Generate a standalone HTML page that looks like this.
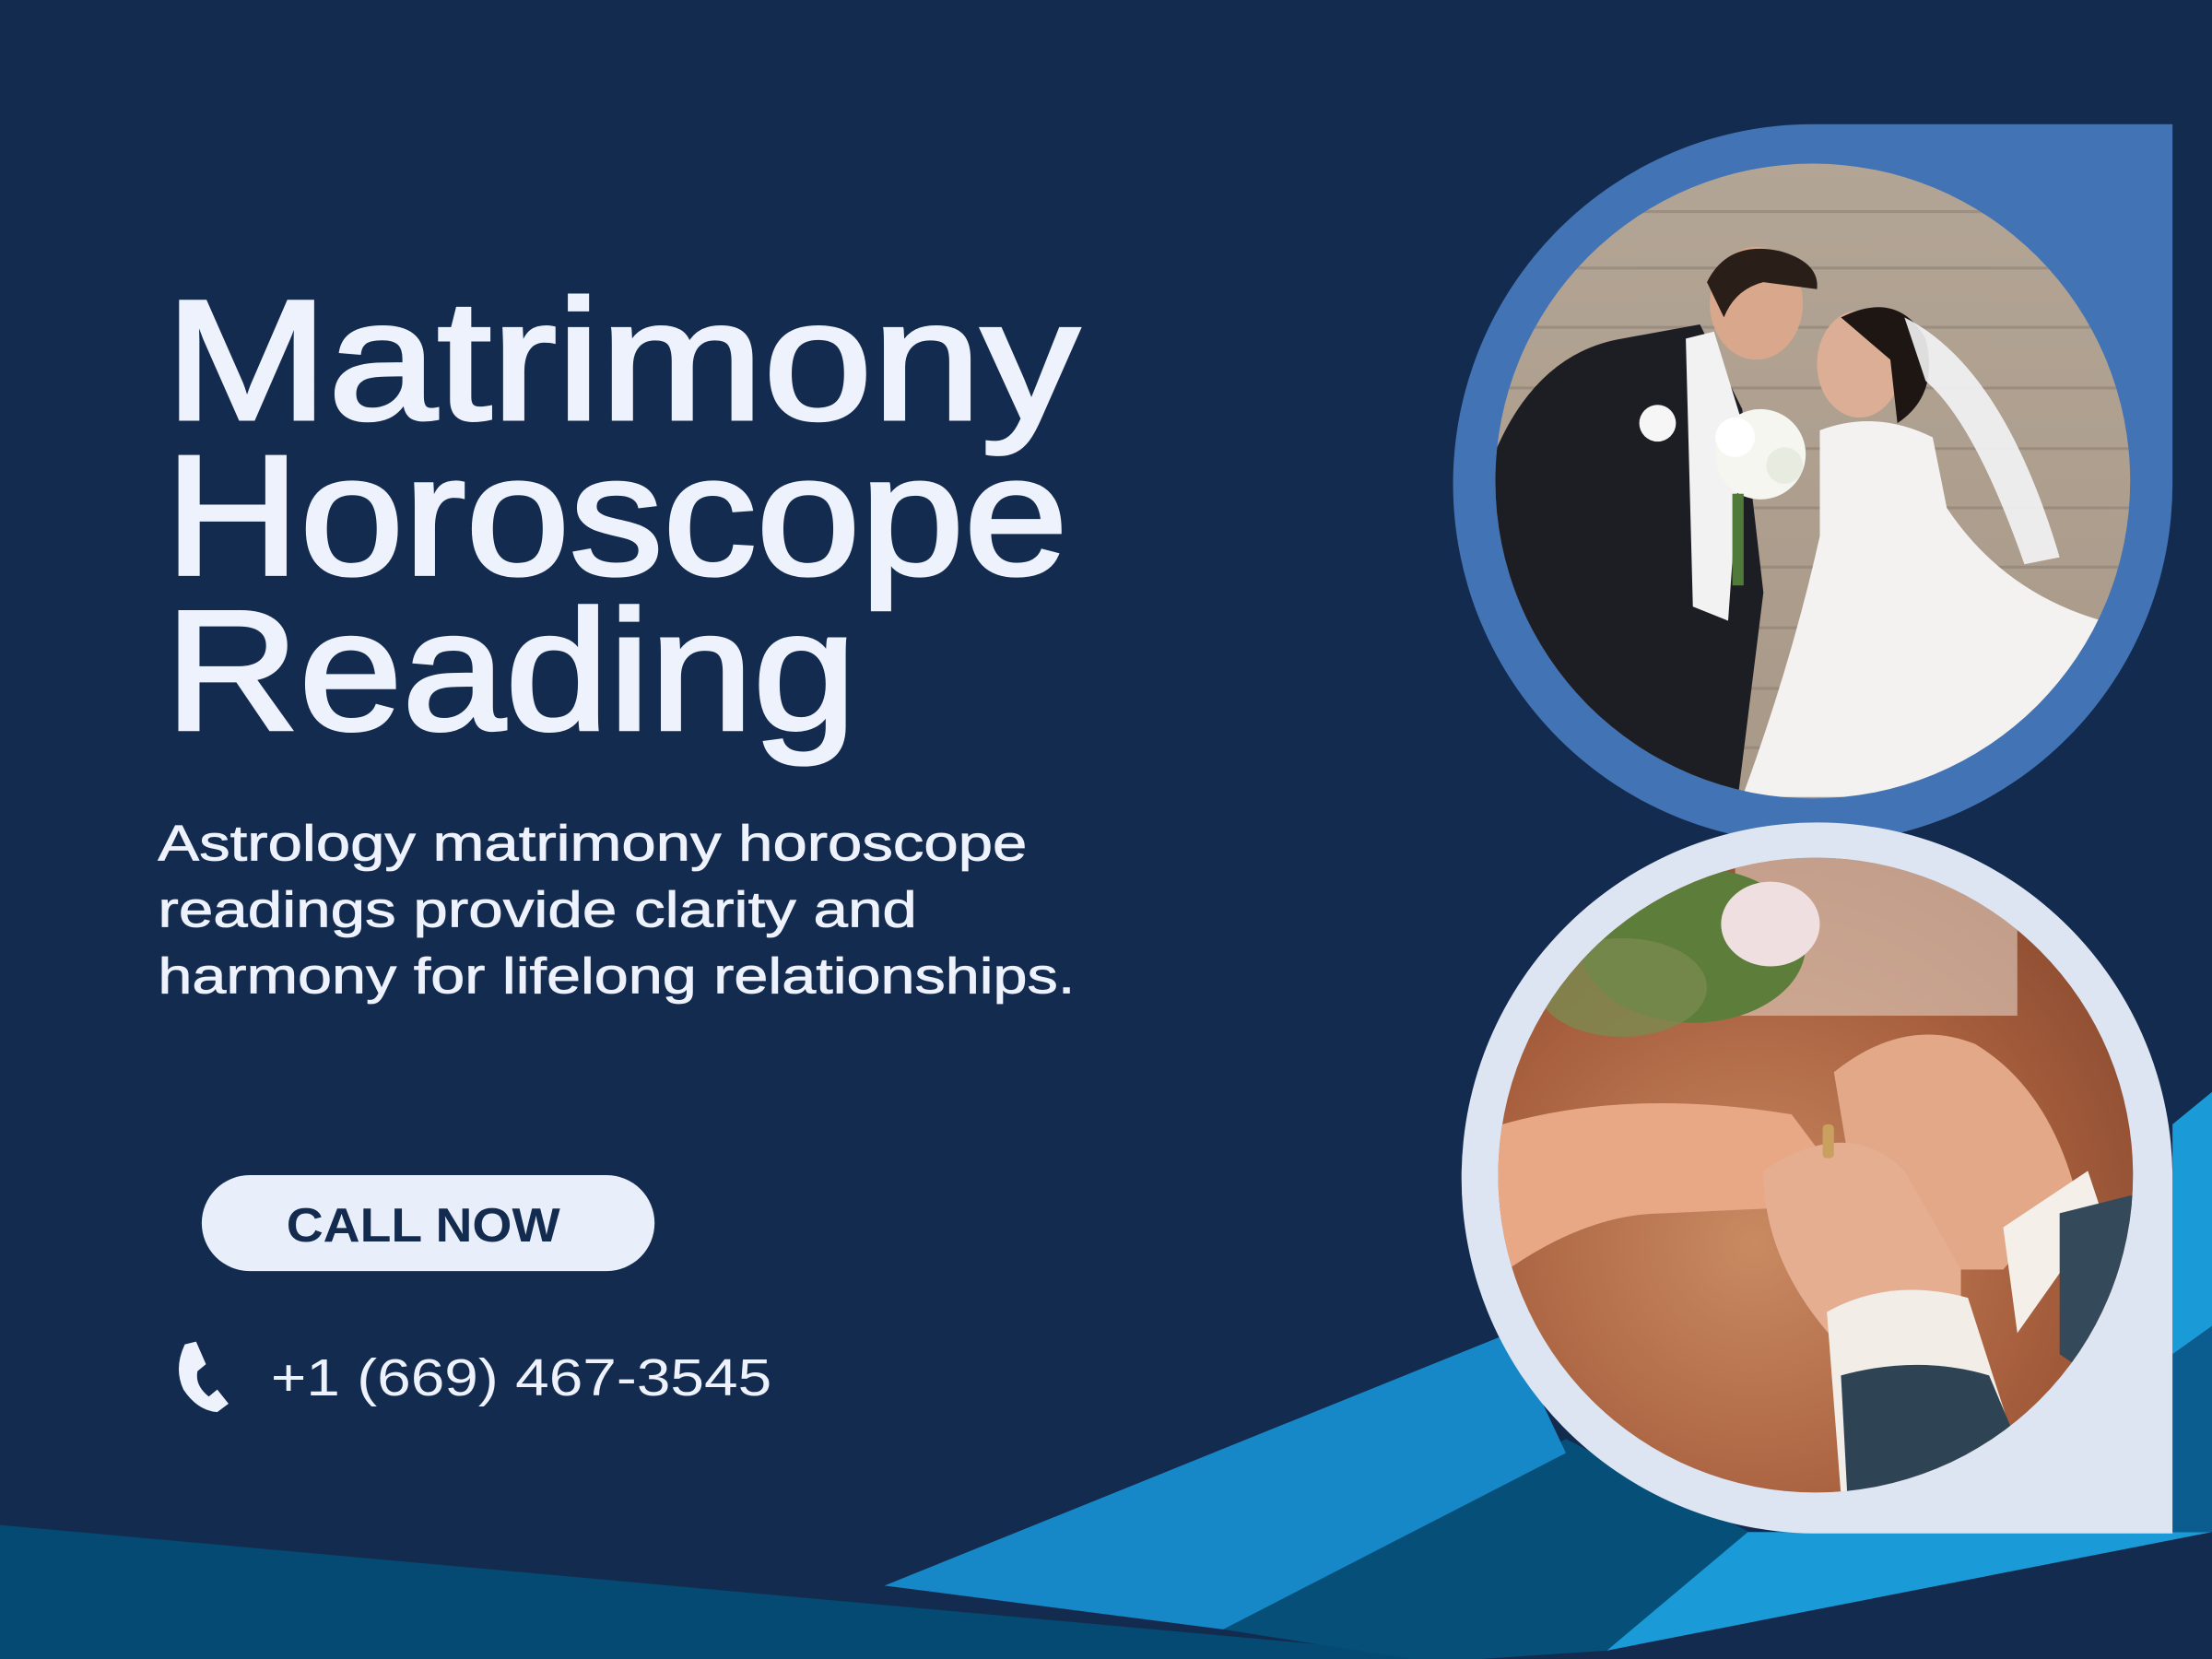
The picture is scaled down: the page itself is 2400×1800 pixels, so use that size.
<!DOCTYPE html>
<html><head><meta charset="utf-8"><style>
html,body{margin:0;padding:0;background:#132b4f;}
svg{display:block}
</style></head><body>
<svg width="2400" height="1800" viewBox="0 0 1568 1176" preserveAspectRatio="none" xmlns="http://www.w3.org/2000/svg">
<defs>
<clipPath id="c1"><circle cx="1285" cy="341" r="225"/></clipPath>
<clipPath id="c2"><circle cx="1287" cy="833" r="225"/></clipPath>
<linearGradient id="wood" x1="0" y1="0" x2="0" y2="1"><stop offset="0" stop-color="#b3a595"/><stop offset="1" stop-color="#a89888"/></linearGradient>
<radialGradient id="warm" cx="0.4" cy="0.6" r="0.7"><stop offset="0" stop-color="#c98a62"/><stop offset="0.6" stop-color="#a8603e"/><stop offset="1" stop-color="#8a4a30"/></radialGradient>
</defs>
<rect width="1568" height="1176" fill="#132b4f"/>
<polygon points="0,1081 1050,1176 0,1176" fill="#054a72"/>
<polygon points="867,1155 1110,1020 1240,1086 1139,1170 1050,1176 1000,1176" fill="#054f79"/>
<polygon points="627,1124 1070,945 1110,1030 867,1155" fill="#1688c8"/>
<polygon points="1139,1170 1239,1086 1568,1086" fill="#1a9ad6"/>
<polygon points="1540,797 1568,774 1568,940 1540,960" fill="#1a9ad6"/>
<polygon points="1540,960 1568,940 1568,1086 1540,1086" fill="#0b5d8f"/>
<path d="M1285,88 L1540,88 L1540,341 A255,255 0 1 1 1285,88 Z" fill="#4273b5"/>
<path d="M1540,835 A252,252 0 1 0 1285,1087 L1540,1087 Z" fill="#dde5f3"/>
<g clip-path="url(#c1)">
<rect x="1050" y="110" width="480" height="470" fill="url(#wood)"/>
<g stroke="#8e8074" stroke-width="2" opacity="0.6">
<line x1="1050" y1="150" x2="1530" y2="150"/><line x1="1050" y1="190" x2="1530" y2="190"/><line x1="1050" y1="232" x2="1530" y2="232"/><line x1="1050" y1="275" x2="1530" y2="275"/><line x1="1050" y1="318" x2="1530" y2="318"/><line x1="1050" y1="360" x2="1530" y2="360"/><line x1="1050" y1="402" x2="1530" y2="402"/><line x1="1050" y1="445" x2="1530" y2="445"/><line x1="1050" y1="488" x2="1530" y2="488"/><line x1="1050" y1="530" x2="1530" y2="530"/>
</g>
<path d="M1060,320 Q1090,250 1150,240 L1205,230 L1235,290 L1250,420 L1232,565 L1060,565 Z" fill="#1d1d24"/>
<path d="M1195,240 L1215,235 L1235,300 L1225,440 L1200,430 Z" fill="#f2f2f2"/>
<ellipse cx="1245" cy="215" rx="33" ry="40" fill="#d9a88c"/>
<path d="M1210,200 Q1225,170 1262,178 Q1290,186 1288,205 L1250,200 Q1230,205 1222,225 Z" fill="#2a1e18"/>
<ellipse cx="1318" cy="258" rx="30" ry="38" fill="#dcae95"/>
<path d="M1305,225 Q1345,205 1365,240 Q1375,280 1345,300 L1340,255 Z" fill="#1e1612"/>
<path d="M1350,225 Q1420,260 1460,395 L1435,400 Q1400,300 1365,270 Z" fill="#f4f4f6" opacity="0.9"/>
<path d="M1290,305 Q1330,290 1370,310 L1380,360 Q1420,420 1490,440 L1490,565 L1235,565 Q1270,470 1290,380 Z" fill="#f3f2f1"/>
<circle cx="1248" cy="322" r="32" fill="#f6f6f0"/>
<circle cx="1230" cy="310" r="14" fill="#ffffff"/><circle cx="1265" cy="330" r="13" fill="#e8ece0"/>
<circle cx="1175" cy="300" r="13" fill="#f6f6f6"/>
<rect x="1228" y="350" width="8" height="65" fill="#4f7a3a"/>
</g>
<g clip-path="url(#c2)">
<rect x="1055" y="600" width="470" height="470" fill="url(#warm)"/>
<rect x="1230" y="600" width="200" height="120" fill="#d7c0b0" opacity="0.7"/>
<ellipse cx="1200" cy="670" rx="80" ry="55" fill="#5d7d3a"/>
<ellipse cx="1255" cy="655" rx="35" ry="30" fill="#f0dfe0"/>
<ellipse cx="1150" cy="700" rx="60" ry="35" fill="#7a8a50" opacity="0.8"/>
<path d="M1055,800 Q1150,770 1270,790 L1300,830 L1290,855 L1180,860 Q1120,860 1055,910 Z" fill="#e8a886"/>
<path d="M1300,760 Q1350,720 1400,740 Q1450,770 1470,840 L1420,900 L1370,900 Q1340,860 1310,820 Z" fill="#e2a888"/>
<path d="M1250,830 Q1310,790 1350,830 L1390,900 L1390,960 L1310,960 Q1250,900 1250,830 Z" fill="#e6ae90"/>
<path d="M1295,930 Q1340,905 1395,920 L1440,1060 L1305,1060 Z" fill="#f2ede6"/>
<path d="M1305,975 Q1360,960 1410,975 L1450,1070 L1310,1070 Z" fill="#2e4354"/>
<path d="M1420,870 L1480,830 L1490,860 L1430,945 Z" fill="#f4efe8"/>
<path d="M1460,860 L1520,845 L1520,1000 L1460,960 Z" fill="#34495a"/>
<rect x="1292" y="797" width="8" height="24" rx="3" fill="#caa060"/>
</g>
<g font-family="'Liberation Sans', sans-serif" fill="#eef2fc">
<g stroke="#eef2fc" stroke-width="2.5">
<text x="117" y="297" font-size="121" textLength="648" lengthAdjust="spacingAndGlyphs">Matrimony</text>
<text x="117" y="407" font-size="121" textLength="640" lengthAdjust="spacingAndGlyphs">Horoscope</text>
<text x="117" y="517" font-size="121" textLength="490" lengthAdjust="spacingAndGlyphs">Reading</text>
</g>
<g stroke="#eef2fc" stroke-width="0.5">
<text x="112" y="610" font-size="36" textLength="616" lengthAdjust="spacingAndGlyphs">Astrology matrimony horoscope</text>
<text x="112" y="657" font-size="36" textLength="538" lengthAdjust="spacingAndGlyphs">readings provide clarity and</text>
<text x="112" y="704" font-size="36" textLength="650" lengthAdjust="spacingAndGlyphs">harmony for lifelong relationships.</text>
</g>
<text x="192" y="989" font-size="37" textLength="355" lengthAdjust="spacingAndGlyphs">+1 (669) 467-3545</text>
</g>
<rect x="143" y="833" width="321" height="68" rx="34" fill="#e8eefa"/>
<text x="203" y="880" font-family="'Liberation Sans', sans-serif" font-weight="bold" font-size="34" fill="#132b4f" textLength="194" lengthAdjust="spacingAndGlyphs">CALL NOW</text>
<path d="M131,953 L139,951 L146,967 L140,972 Q138,982 148,990 L154,985 L162,995 L154,1001 Q140,1000 130,985 Q123,970 131,953 Z" fill="#eef2fc"/>
</svg>
</body></html>
